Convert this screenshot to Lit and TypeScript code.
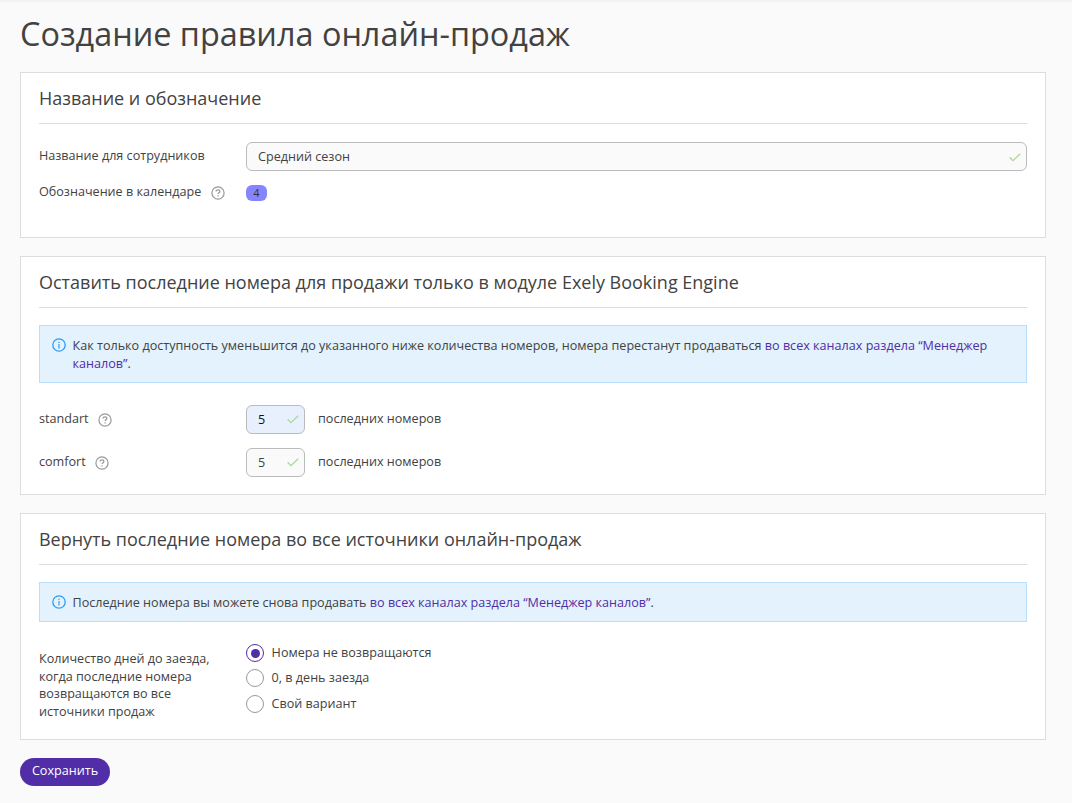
import { LitElement, html, css } from "lit";
import { customElement } from "lit/decorators.js";

const check = html`<svg class="check" width="12" height="9" viewBox="0 0 12 9" fill="none" stroke="#aad898" stroke-width="1.3"><path d="M.6 4.3 4 7.7 11.2.7" /></svg>`;

const help = html`<svg class="help" width="14" height="14" viewBox="0 0 14 14" fill="none" stroke="#999" stroke-width="1.2">
  <circle cx="7" cy="7" r="6.1" />
  <path d="M5.1 5.6C5.1 4.4 5.9 3.8 7 3.8s1.9.7 1.9 1.7c0 1.3-1.8 1.3-1.8 2.6" />
  <path d="M7.1 9.2v1.3" />
</svg>`;

const info = html`<svg class="info" width="14" height="14" viewBox="0 0 14 14" fill="none" stroke="#2a9df4" stroke-width="1.3">
  <circle cx="7" cy="7" r="6.2" />
  <path d="M7 6.1v4.3M7 3.7v1.3" stroke-width="1.2" />
</svg>`;

@customElement("app-root")
export class AppRoot extends LitElement {
  static styles = css`
    :host {
      display: block;
      box-sizing: border-box;
      height: 803px;
      padding: 0 26px 0 20px;
      border-top: 2px solid #f3f3f3;
      background: #fafafa;
      color: #424242;
      font: 12.6px/17.64px "Open Sans", sans-serif;
      overflow: hidden;
    }
    * { box-sizing: border-box; }
    h1 { margin: 0; height: 70px; padding-top: 8px; font-size: 32.4px; line-height: 46px; font-weight: 380; white-space: nowrap; }
    .card { background: #fff; border: 1px solid #ddd; padding: 0 18px; margin-bottom: 18px; }
    .names { height: 166px; }
    .keep { height: 239px; }
    .giveback { height: 227px; }
    h2 { margin: 0; height: 51px; border-bottom: 1px solid #ddd; font-size: 17.99px; line-height: 50px; font-weight: 400; white-space: nowrap; }
    .row { display: grid; grid-template-columns: 207px 1fr; }
    .names .first { margin-top: 18px; height: 29px; }
    .label { display: flex; }
    .first .label { padding-top: 5px; }
    .field { display: flex; align-items: center; justify-content: space-between; height: 29px; padding: 0 5px 0 11px; border: 1px solid #bbb; border-radius: 6px; background: #fafafa; }
    .small { width: 59px; }
    .filled { background: #e8f0fe; color: #111; }
    .check { display: block; flex: none; margin-top: 1px; }
    .help { display: block; flex: none; margin: 3px 0 0 9.5px; }
    .mark { margin-top: 11px; }
    .mark .label { padding-top: 1px; }
    .badge { width: 21px; height: 16px; margin-top: 3px; border-radius: 6px; background: #8585ff; font-size: 11px; line-height: 16px; text-align: center; color: #333; }
    .note { display: flex; margin-top: 17px; padding: 11px 12px 9.4px 12px; border: 1px solid #bbdefb; background: #e3f2fd; }
    .info { display: block; flex: none; margin: 1px 6.5px 0 0; }
    .link { color: #512da8; }
    .rooms { margin-top: 22.3px; height: 29px; }
    .rooms + .rooms { margin-top: 14px; }
    .rooms .label { padding-top: 5px; }
    .value { display: flex; gap: 13px; }
    .value span.unit { padding-top: 5px; }
    .days { margin-top: 21px; }
    .days .label { padding-top: 7px; }
    .option { display: flex; gap: 7.6px; height: 25.4px; }
    .option .text { padding-top: 1px; }
    .radio { flex: none; width: 18px; height: 18px; margin-top: 1px; border: 1px solid #999; border-radius: 50%; background: #fff; display: grid; place-items: center; }
    .radio.on { border-color: #512da8; }
    .radio.on::after { content: ""; width: 9px; height: 9px; border-radius: 50%; background: #512da8; }
    button { display: block; width: 90px; height: 28px; padding: 0 0 3px; border: 0; border-radius: 14px; background: #512da8; color: #fff; font: 12.6px/25px "Open Sans", sans-serif; }
  `;

  private rooms = [
    { name: "standart", count: 5, filled: true },
    { name: "comfort", count: 5, filled: false },
  ];

  private options = ["Номера не возвращаются", "0, в день заезда", "Свой вариант"];

  render() {
    return html`
      <h1>Создание правила онлайн-продаж</h1>
      <section class="card names">
        <h2>Название и обозначение</h2>
        <div class="row first">
          <div class="label">Название для сотрудников</div>
          <div class="field"><span>Средний сезон</span>${check}</div>
        </div>
        <div class="row mark">
          <div class="label">Обозначение в календаре ${help}</div>
          <div class="badge">4</div>
        </div>
      </section>
      <section class="card keep">
        <h2>Оставить последние номера для продажи только в модуле Exely Booking Engine</h2>
        <div class="note">${info}<div>Как только доступность уменьшится до указанного ниже количества номеров, номера перестанут продаваться <span class="link">во всех каналах раздела “Менеджер каналов”</span>.</div></div>
        ${this.rooms.map((r) => html`
          <div class="row rooms">
            <div class="label">${r.name} ${help}</div>
            <div class="value">
              <div class="field small ${r.filled ? "filled" : ""}"><span>${r.count}</span>${check}</div>
              <span class="unit">последних номеров</span>
            </div>
          </div>`)}
      </section>
      <section class="card giveback">
        <h2>Вернуть последние номера во все источники онлайн-продаж</h2>
        <div class="note">${info}<div>Последние номера вы можете снова продавать <span class="link">во всех каналах раздела “Менеджер каналов”</span>.</div></div>
        <div class="row days">
          <div class="label">Количество дней до заезда,<br />когда последние номера<br />возвращаются во все<br />источники продаж</div>
          <div>${this.options.map((o, i) => html`<div class="option"><span class="radio ${i === 0 ? "on" : ""}"></span><span class="text">${o}</span></div>`)}</div>
        </div>
      </section>
      <button>Сохранить</button>
    `;
  }
}
